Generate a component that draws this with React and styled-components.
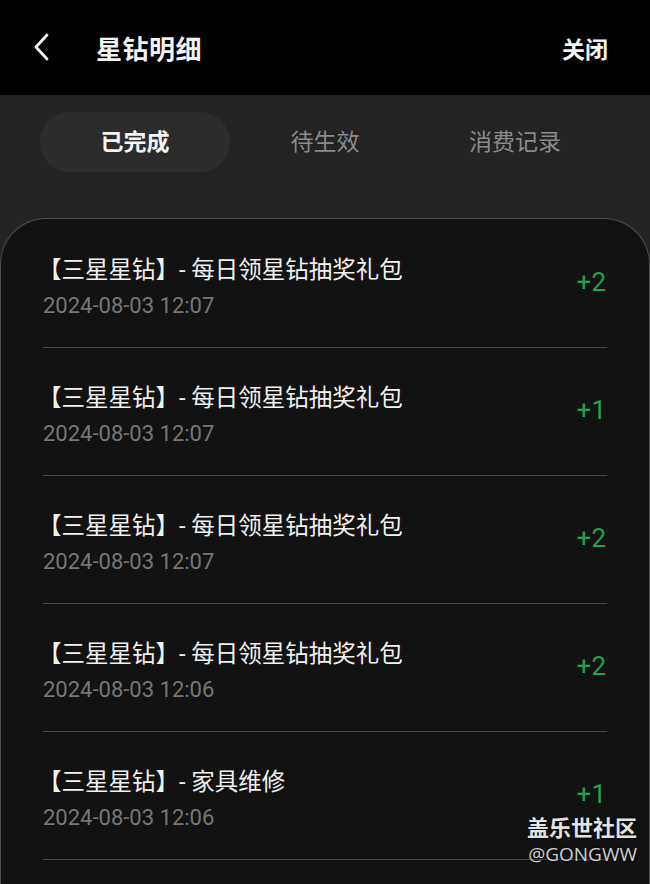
import React from "react"
import styled, { createGlobalStyle } from "styled-components"

const GlobalStyle = createGlobalStyle`
  html, body {
    margin: 0;
    padding: 0;
    background: #232323;
    overflow: hidden;
  }
  body {
    font-family: Roboto, "Noto Sans CJK SC", sans-serif;
  }
`

const Page = styled.div`
  position: relative;
  width: 650px;
  height: 884px;
  overflow: hidden;
  background: #232323;
`

const Header = styled.header`
  height: 95px;
  background: #000;
  display: flex;
  align-items: center;
  padding: 0 42px 0 30px;
  box-sizing: border-box;
`

const BackButton = styled.button`
  width: 24px;
  height: 30px;
  padding: 0;
  border: 0;
  background: none;
  display: flex;
  align-items: center;
  justify-content: center;
  margin-top: -2px;
`

const Title = styled.h1`
  margin: 0 0 0 42px;
  flex: 1;
  font-size: 26px;
  font-weight: 700;
  color: #f2f2f2;
  font-family: "Noto Sans CJK SC", sans-serif;
  letter-spacing: 0.5px;
`

const CloseButton = styled.span`
  font-size: 23px;
  font-weight: 700;
  color: #f2f2f2;
  font-family: "Noto Sans CJK SC", sans-serif;
`

const Tabs = styled.nav`
  display: grid;
  grid-template-columns: repeat(3, 1fr);
  margin: 17px 40px 0;
  height: 60px;
`

const Tab = styled.div`
  display: flex;
  align-items: center;
  justify-content: center;
  padding-bottom: 5px;
  box-sizing: border-box;
  border-radius: 30px;
  font-family: "Noto Sans CJK SC", sans-serif;
  font-size: 23px;
  font-weight: ${p => (p.$active ? 700 : 400)};
  color: ${p => (p.$active ? "#f4f4f4" : "#8a8a8a")};
  background: ${p => (p.$active ? "#2c2c2c" : "transparent")};
`

const Card = styled.section`
  margin-top: 46px;
  background: #121212;
  border: 1px solid #4e4e4e;
  border-bottom: 0;
  border-radius: 46px 46px 0 0;
  padding: 1px 42px 0 42px;
  min-height: 700px;
`

const Row = styled.div`
  display: flex;
  align-items: center;
  padding: 33px 0 26px;
  border-bottom: 1px solid #474747;
`

const RowText = styled.div`
  flex: 1;
`

const RowTitle = styled.div`
  margin-left: -5px;
  font-size: 23.5px;
  line-height: 34px;
  color: #f1f1f1;
  white-space: nowrap;
`

const RowDate = styled.div`
  margin-top: 4px;
  font-family: Roboto, sans-serif;
  font-size: 22px;
  line-height: 30px;
  color: #767676;
`

const Amount = styled.div`
  font-family: Roboto, sans-serif;
  font-size: 26px;
  color: #25a04d;
  margin: 0 1px 10px 0;
`

const Watermark = styled.div`
  position: absolute;
  right: 13px;
  bottom: 20px;
  text-align: right;
  color: #e2e2e2;
  text-shadow: 0 0 3px rgba(0, 0, 0, 0.9);
  line-height: 1;
`

const WatermarkName = styled.div`
  font-family: "Noto Sans CJK SC", sans-serif;
  font-size: 22px;
  font-weight: 700;
  margin-bottom: 8px;
`

const WatermarkHandle = styled.div`
  font-family: "Open Sans", sans-serif;
  font-size: 19px;
  color: #d0d0d0;
`

const ChevronLeft = () => (
  <svg width="20" height="30" viewBox="0 0 20 30" fill="none">
    <path d="M15 3 L4 15 L15 27" stroke="#f2f2f2" strokeWidth="2.8" strokeLinecap="round" strokeLinejoin="round" />
  </svg>
)

const records = [
  { title: "【三星星钻】- 每日领星钻抽奖礼包", date: "2024-08-03 12:07", amount: 2 },
  { title: "【三星星钻】- 每日领星钻抽奖礼包", date: "2024-08-03 12:07", amount: 1 },
  { title: "【三星星钻】- 每日领星钻抽奖礼包", date: "2024-08-03 12:07", amount: 2 },
  { title: "【三星星钻】- 每日领星钻抽奖礼包", date: "2024-08-03 12:06", amount: 2 },
  { title: "【三星星钻】- 家具维修", date: "2024-08-03 12:06", amount: 1 },
]

const tabs = ["已完成", "待生效", "消费记录"]

export default function App() {
  return (
    <Page>
      <GlobalStyle />
      <Header>
        <BackButton aria-label="返回">
          <ChevronLeft />
        </BackButton>
        <Title>星钻明细</Title>
        <CloseButton>关闭</CloseButton>
      </Header>
      <Tabs>
        {tabs.map((t, i) => (
          <Tab key={t} $active={i === 0}>
            {t}
          </Tab>
        ))}
      </Tabs>
      <Card>
        {records.map((r, i) => (
          <Row key={i}>
            <RowText>
              <RowTitle>{r.title}</RowTitle>
              <RowDate>{r.date}</RowDate>
            </RowText>
            <Amount>+{r.amount}</Amount>
          </Row>
        ))}
      </Card>
      <Watermark>
        <WatermarkName>盖乐世社区</WatermarkName>
        <WatermarkHandle>@GONGWW</WatermarkHandle>
      </Watermark>
    </Page>
  )
}
